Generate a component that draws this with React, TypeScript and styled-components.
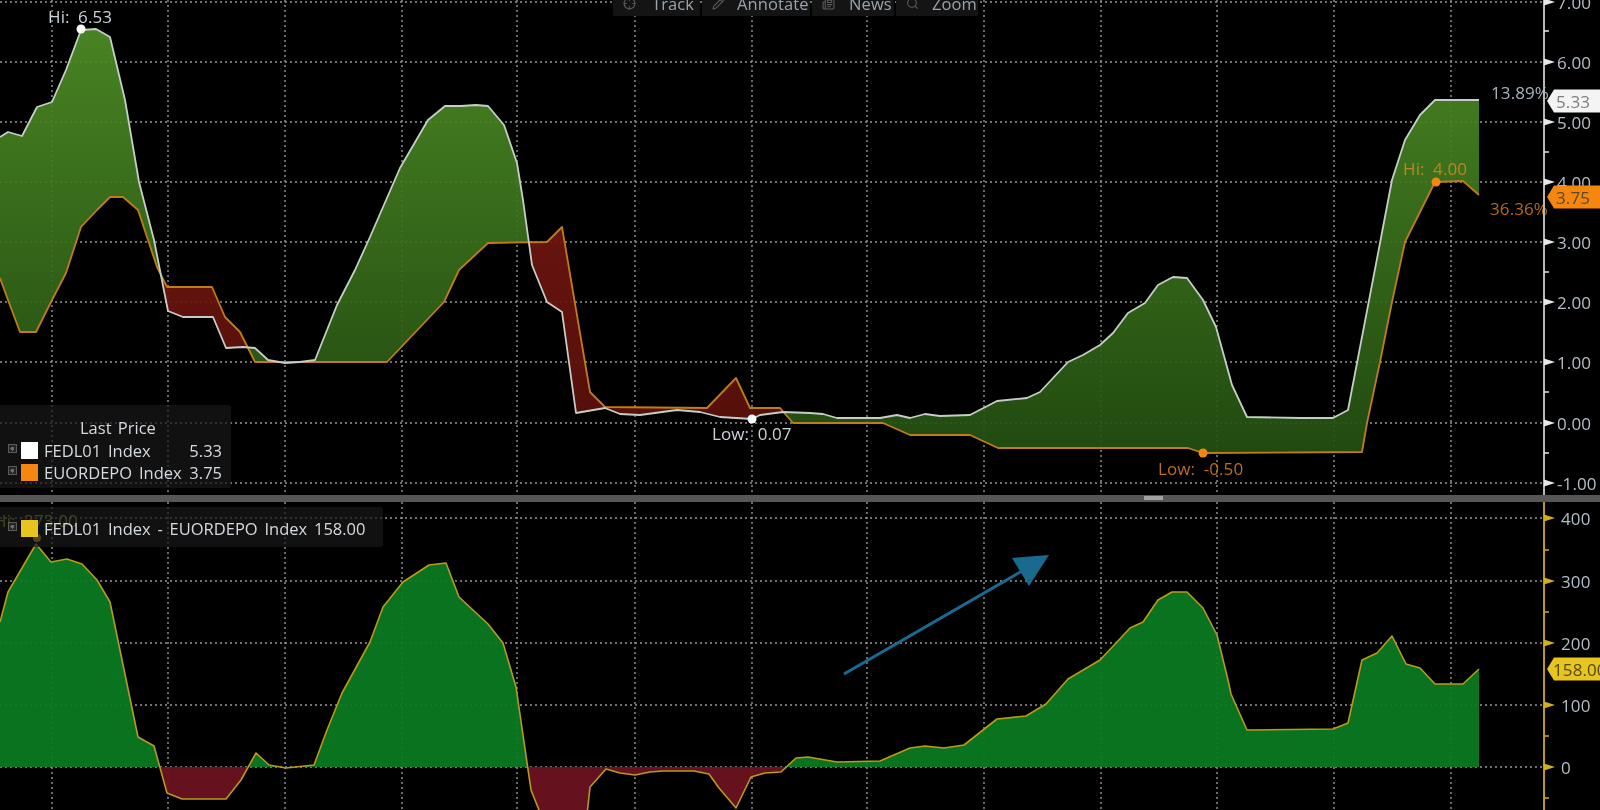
import React from 'react';
import styled, { createGlobalStyle } from 'styled-components';
import { Crosshair, Pencil, Newspaper, Search } from 'lucide-react';

type Pt = [number, number];

const WHITE: Pt[] = [[0,137],[8,132],[22,136],[37,107],[52,102],[66,70],[81,30],[96,29],[110,37],[125,100],[139,182],[154,240],[168,311],[183,317],[213,317],[226,348],[243,347],[255,348],[268,360],[285,363],[300,362],[315,360],[337,305],[355,270],[370,237],[400,168],[428,120],[445,106],[461,106],[476,105],[488,106],[504,125],[517,163],[523,200],[532,265],[547,302],[562,312],[576,413],[605,408],[620,414],[640,415],[677,410],[700,412],[720,417],[752,419],[760,415],[783,412],[810,413],[823,414],[837,418],[880,418],[897,415],[910,418],[925,414],[940,416],[970,415],[997,401],[1027,398],[1040,392],[1068,362],[1083,355],[1100,345],[1113,333],[1128,313],[1145,303],[1158,285],[1173,277],[1187,278],[1203,300],[1216,327],[1232,385],[1247,417],[1300,418],[1333,418],[1348,410],[1380,243],[1392,180],[1405,140],[1420,115],[1435,100],[1479,100]];

const ORANGE: Pt[] = [[0,278],[8,300],[20,332],[36,332],[52,300],[66,273],[81,227],[97,210],[110,197],[123,197],[138,210],[157,267],[167,287],[212,287],[225,317],[240,332],[255,362],[387,362],[444,302],[459,270],[488,243],[547,242],[562,227],[590,392],[605,407],[707,408],[736,378],[750,408],[780,408],[793,423],[883,423],[910,435],[970,435],[998,448],[1188,448],[1203,453],[1362,452],[1367,423],[1380,362],[1392,302],[1405,242],[1435,182],[1463,181],[1479,195]];

const SPREAD: Pt[] = [[0,622],[8,592],[36,544],[51,562],[67,559],[82,564],[97,580],[110,602],[138,737],[154,746],[167,793],[182,799],[226,799],[241,780],[256,753],[269,765],[286,768],[314,765],[327,730],[342,693],[370,642],[383,607],[403,582],[429,565],[446,563],[459,597],[488,624],[503,643],[516,687],[531,790],[541,815],[587,815],[590,787],[606,769],[620,773],[635,775],[650,772],[663,771],[694,771],[709,774],[719,788],[736,808],[751,777],[765,773],[781,772],[796,758],[808,757],[837,762],[880,761],[910,748],[925,746],[944,748],[964,745],[997,719],[1026,716],[1046,704],[1068,679],[1100,660],[1117,642],[1130,628],[1143,622],[1158,600],[1172,592],[1187,592],[1203,608],[1217,635],[1228,680],[1231,694],[1247,730],[1333,729],[1348,723],[1362,660],[1377,653],[1392,636],[1406,664],[1420,668],[1435,684],[1463,684],[1479,669]];

const GRID_X = [52, 168, 285, 402, 517, 635, 752, 867, 984, 1101, 1217, 1334, 1451];
const TOP_TICKS: [number, string][] = [[2,'7.00'],[62,'6.00'],[122,'5.00'],[182,'4.00'],[242,'3.00'],[302,'2.00'],[362,'1.00'],[423,'0.00'],[483,'-1.00']];
const BOTTOM_TICKS: [number, string][] = [[518,'400'],[581,'300'],[643,'200'],[705,'100'],[767,'0']];

const line = (p: Pt[]) => p.map(([x, y]) => `${x},${y}`).join(' ');

const interp = (p: Pt[], x: number) => {
  for (let i = 1; i < p.length; i++) {
    if (x <= p[i][0]) {
      const [x0, y0] = p[i - 1];
      const [x1, y1] = p[i];
      return y0 + ((y1 - y0) * (x - x0)) / (x1 - x0);
    }
  }
  return p[p.length - 1][1];
};

type Band = { up: boolean; points: Pt[] };

const bands = (a: Pt[], b: Pt[]): Band[] => {
  const xs = Array.from(new Set([...a, ...b].map((q) => q[0]))).sort((m, n) => m - n);
  const out: Band[] = [];
  let topRun: Pt[] = [];
  let lowRun: Pt[] = [];
  let up: boolean | null = null;
  const flush = () => {
    if (up !== null && topRun.length > 1) out.push({ up, points: [...topRun, ...lowRun.reverse()] });
    topRun = [];
    lowRun = [];
  };
  xs.forEach((x, i) => {
    const ya = interp(a, x);
    const yb = interp(b, x);
    const now = ya < yb;
    if (i > 0 && up !== null && now !== up && ya !== yb) {
      const px = xs[i - 1];
      const d0 = interp(a, px) - interp(b, px);
      const d1 = ya - yb;
      const cx = px + ((x - px) * d0) / (d0 - d1);
      const cy = interp(a, cx);
      topRun.push([cx, cy]);
      lowRun.push([cx, cy]);
      flush();
      topRun.push([cx, cy]);
      lowRun.push([cx, cy]);
    }
    if (ya !== yb) up = now;
    topRun.push([x, ya]);
    lowRun.push([x, yb]);
  });
  flush();
  return out;
};

const BANDS = bands(WHITE, ORANGE);

const Global = createGlobalStyle`
  html, body { margin: 0; padding: 0; background: #000; overflow: hidden; }
`;

const Screen = styled.div`
  width: 1600px;
  height: 810px;
  display: flex;
  flex-direction: column;
  background: #000;
  overflow: hidden;
  font-family: "Open Sans", "Noto Sans", sans-serif;
  filter: blur(0.55px);
`;

const TopPane = styled.section`
  position: relative;
  height: 495px;
  flex: none;
  overflow: hidden;
`;

const BottomPane = styled.section`
  position: relative;
  flex: 1;
  overflow: hidden;
`;

const Divider = styled.div`
  height: 7px;
  flex: none;
  background: #565656;
  display: flex;
  padding-left: 1144px;
`;

const Grip = styled.span`
  width: 19px;
  height: 4px;
  margin-top: 1px;
  background: #a2a2a2;
`;

const Plot = styled.svg`
  display: block;
  width: 1600px;
  height: 100%;
`;

const GridLine = styled.line`
  stroke: #969696;
  stroke-width: 1.4;
  stroke-dasharray: 2 3;
`;

const Trace = styled.polyline<{ $color: string; $w?: number }>`
  fill: none;
  stroke: ${(p) => p.$color};
  stroke-width: ${(p) => p.$w ?? 1.8};
  stroke-linejoin: round;
`;

const Axis = styled.line<{ $color: string }>`
  stroke: ${(p) => p.$color};
  stroke-width: 2;
`;

const Minor = styled.line<{ $color: string }>`
  stroke: ${(p) => p.$color};
  stroke-width: 1.5;
`;

const ChartText = styled.text<{ $color: string; $size?: number }>`
  fill: ${(p) => p.$color};
  font-family: "Open Sans", "Noto Sans", sans-serif;
  font-size: ${(p) => p.$size ?? 17}px;
  word-spacing: 4px;
  letter-spacing: 0.1px;
  dominant-baseline: central;
`;

const Toolbar = styled.nav`
  position: absolute;
  top: 0;
  left: 613px;
  height: 16px;
  display: flex;
  gap: 2px;
  overflow: hidden;
`;

const ToolButton = styled.div<{ $w: number; $gap: number }>`
  width: ${(p) => p.$w}px;
  height: 26px;
  margin-top: -10px;
  background: #141414;
  display: flex;
  align-items: center;
  gap: ${(p) => p.$gap}px;
  padding-left: 10px;
  box-sizing: border-box;
  color: #9aa4ae;
  font-size: 16.5px;
  letter-spacing: 0.1px;
  svg { color: #5c5c5c; flex: none; }
`;

const Legend = styled.div<{ $top: number; $w: number; $h: number }>`
  position: absolute;
  left: 0;
  top: ${(p) => p.$top}px;
  width: ${(p) => p.$w}px;
  height: ${(p) => p.$h}px;
  box-sizing: border-box;
  padding-right: 9px;
  background: rgba(24, 24, 24, 0.72);
  border-radius: 0 3px 3px 0;
  color: #d4dae0;
  font-size: 16.5px;
`;

const LegendTitle = styled.div`
  height: 22px;
  line-height: 22px;
  margin-top: 12px;
  padding-left: 80px;
  word-spacing: 2px;
`;

const LegendRow = styled.div<{ $center?: boolean }>`
  height: 22px;
  display: flex;
  align-items: center;
  padding-left: 8px;
  margin-top: ${(p) => (p.$center ? 10 : 0)}px;
`;

const Expander = styled.span`
  width: 7px;
  height: 7px;
  flex: none;
  border: 1px solid #5a5a5a;
  background: radial-gradient(circle, #6a6a6a 0 2px, #262626 2px);
  margin-right: 4px;
  margin-top: -3px;
`;

const Swatch = styled.span<{ $color: string }>`
  width: 17px;
  height: 17px;
  flex: none;
  background: ${(p) => p.$color};
  margin-right: 6px;
`;

const SeriesName = styled.span`
  flex: 1;
  white-space: nowrap;
  word-spacing: 2.5px;
`;

const SeriesValue = styled.span`
  flex: none;
`;

const Tag = ({ y, fill, text, color, x }: { y: number; fill: string; text: string; color: string; x: number }) => (
  <g>
    <polygon fill={fill} points={`1547,${y} 1554,${y - 11.5} 1600,${y - 11.5} 1600,${y + 11.5} 1554,${y + 11.5}`} />
    <ChartText $color={color} x={x} y={y}>{text}</ChartText>
  </g>
);

const Ticks = ({ ticks, color, textColor, labelX, minorOf }: { ticks: [number, string][]; color: string; textColor: string; labelX: number; minorOf: number[] }) => (
  <g>
    {ticks.map(([y, label]) => (
      <g key={label}>
        <polygon fill={color} points={`1544,${y - 3.5} 1555,${y} 1544,${y + 3.5}`} />
        <ChartText $color={textColor} x={labelX} y={y}>{label}</ChartText>
      </g>
    ))}
    {minorOf.map((y) => (
      <Minor key={y} $color={color} x1={1544} x2={1549} y1={y} y2={y} />
    ))}
  </g>
);

export default function App() {
  return (
    <>
      <Global />
      <Screen>
        <TopPane>
          <Plot viewBox="0 0 1600 495">
            <defs>
              <linearGradient id="greenFill" gradientUnits="userSpaceOnUse" x1="0" y1="20" x2="0" y2="460">
                <stop offset="0" stopColor="#4f8f26" />
                <stop offset="1" stopColor="#234f11" />
              </linearGradient>
              <linearGradient id="redFill" gradientUnits="userSpaceOnUse" x1="0" y1="220" x2="0" y2="430">
                <stop offset="0" stopColor="#701610" />
                <stop offset="1" stopColor="#5c100b" />
              </linearGradient>
            </defs>
            {TOP_TICKS.map(([y]) => (
              <GridLine key={y} x1={0} x2={1544} y1={y} y2={y} />
            ))}
            {GRID_X.map((x) => (
              <GridLine key={x} x1={x} x2={x} y1={0} y2={495} />
            ))}
            {BANDS.map((b, i) => (
              <polygon key={i} points={line(b.points)} fill={b.up ? 'url(#greenFill)' : 'url(#redFill)'} fillOpacity={0.92} />
            ))}
            <Trace $color="#c07c1a" points={line(ORANGE)} />
            <Trace $color="#c4cec6" points={line(WHITE)} />
            <circle cx={81} cy={29} r={4.5} fill="#fff" />
            <circle cx={752} cy={419} r={4.5} fill="#fff" />
            <circle cx={1436} cy={182} r={4.5} fill="#f5860f" />
            <circle cx={1203} cy={453} r={4.5} fill="#f5860f" />
            <ChartText $color="#ccd2d8" x={48} y={16}>Hi: 6.53</ChartText>
            <ChartText $color="#ccd2d8" x={712} y={433}>Low: 0.07</ChartText>
            <ChartText $color="#c08420" x={1403} y={168}>Hi: 4.00</ChartText>
            <ChartText $color="#bc6e18" x={1158} y={468}>Low: -0.50</ChartText>
            <ChartText $color="#a8b2be" x={1491} y={92}>13.89%</ChartText>
            <ChartText $color="#b46a14" x={1490} y={208}>36.36%</ChartText>
            <Axis $color="#b8b8b8" x1={1544} x2={1544} y1={0} y2={495} />
            <Ticks ticks={TOP_TICKS} color="#e8e8e8" textColor="#b4bec8" labelX={1557} minorOf={[31, 152, 272, 392, 453]} />
            <Tag y={101} fill="#f4f4f4" text="5.33" color="#7c8084" x={1556} />
            <Tag y={197} fill="#f5860f" text="3.75" color="#5a4a2c" x={1556} />
          </Plot>
          <Toolbar>
            <ToolButton $w={87} $gap={16}><Crosshair size={13} />Track</ToolButton>
            <ToolButton $w={108} $gap={12}><Pencil size={13} />Annotate</ToolButton>
            <ToolButton $w={82} $gap={14}><Newspaper size={13} />News</ToolButton>
            <ToolButton $w={82} $gap={13}><Search size={13} />Zoom</ToolButton>
          </Toolbar>
          <Legend $top={405} $w={231} $h={83}>
            <LegendTitle>Last Price</LegendTitle>
            <LegendRow>
              <Expander />
              <Swatch $color="#ffffff" />
              <SeriesName>FEDL01 Index</SeriesName>
              <SeriesValue>5.33</SeriesValue>
            </LegendRow>
            <LegendRow>
              <Expander />
              <Swatch $color="#f5860f" />
              <SeriesName>EUORDEPO Index</SeriesName>
              <SeriesValue>3.75</SeriesValue>
            </LegendRow>
          </Legend>
        </TopPane>
        <Divider><Grip /></Divider>
        <BottomPane>
          <Plot viewBox="0 502 1600 308">
            <defs>
              <linearGradient id="spreadFill" gradientUnits="userSpaceOnUse" x1="0" y1="502" x2="0" y2="810">
                <stop offset="0.86" stopColor="#0b7a22" />
                <stop offset="0.86" stopColor="#6c1220" />
              </linearGradient>
            </defs>
            {BOTTOM_TICKS.map(([y]) => (
              <GridLine key={y} x1={0} x2={1544} y1={y} y2={y} />
            ))}
            {GRID_X.map((x) => (
              <GridLine key={x} x1={x} x2={x} y1={502} y2={810} />
            ))}
            <polygon points={`0,767 ${line(SPREAD)} 1479,767`} fill="url(#spreadFill)" fillOpacity={0.94} />
            <Trace $color="#b89a1c" $w={1.6} points={line(SPREAD)} />
            <circle cx={37} cy={538} r={4} fill="#d8b81e" />
            <ChartText $color="#b0b030" x={-6} y={520}>Hi: 373.00</ChartText>
            <Axis $color="#b89c14" x1={1544} x2={1544} y1={502} y2={810} />
            <Ticks ticks={BOTTOM_TICKS} color="#d2ae18" textColor="#b4bec8" labelX={1561} minorOf={[550, 612, 736, 798]} />
            <Tag y={669} fill="#e8c41e" text="158.00" color="#54481a" x={1553} />
            <line x1={844} y1={674} x2={1022} y2={571} stroke="#1a6a90" strokeWidth={3} />
            <polygon points="1012,558 1049,555 1029,586" fill="#1a6a90" />
          </Plot>
          <Legend $top={5} $w={383} $h={40}>
            <LegendRow $center>
              <Expander />
              <Swatch $color="#e8c41e" />
              <SeriesName>FEDL01 Index - EUORDEPO Index 158.00</SeriesName>
            </LegendRow>
          </Legend>
        </BottomPane>
      </Screen>
    </>
  );
}
